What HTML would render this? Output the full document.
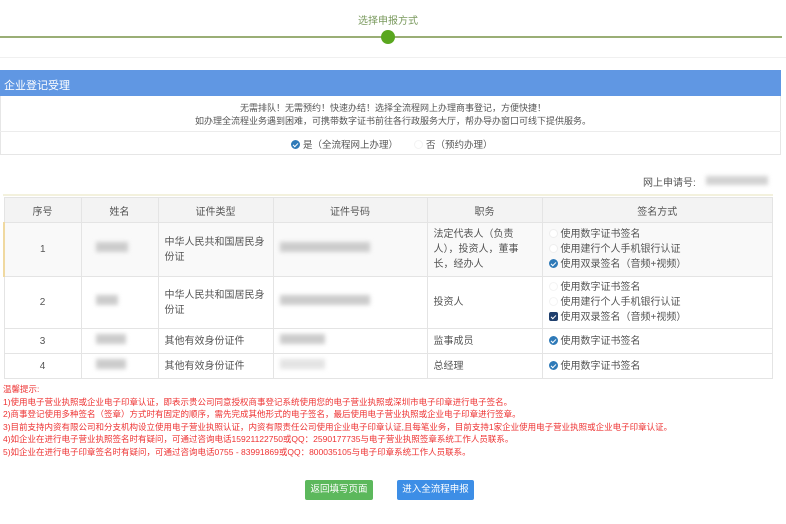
<!DOCTYPE html>
<html><head><meta charset="utf-8"><style>
*{margin:0;padding:0;box-sizing:border-box}
body{width:786px;height:524px;background:#fff;font-family:"Liberation Sans","Noto Sans CJK SC",sans-serif;color:#555;position:relative;overflow:hidden;font-size:10px}
.a{position:absolute;white-space:nowrap}
table{position:absolute;left:3px;top:197px;width:770px;border-collapse:collapse;font-size:10px;color:#555}
td,th{border:1px solid #e4e4e4;font-weight:normal;vertical-align:middle}
th{background:#f3f3f3;height:25px;text-align:center}
td{padding-left:6px;line-height:15px}
.c{text-align:center;padding-left:0}
.blur{display:inline-block;height:10px;background:#ccc;filter:blur(2px)}
.r{display:inline-block;width:9px;height:9px;border-radius:50%;border:1px solid #ddd;vertical-align:-1px;margin-right:3px;background:#fff}
.ck{background:#2f7ab8;border-color:#2f7ab8;position:relative}
.ck:after{content:"";position:absolute;left:2px;top:1px;width:2px;height:4px;border:solid #fff;border-width:0 1px 1px 0;transform:rotate(45deg)}
.sq{border-radius:2px;background:#1f3f6d;border-color:#1f3f6d}
.notes{position:absolute;left:3px;top:383px;color:#e33;font-size:8.5px;line-height:12.6px}
.btn{position:absolute;top:480px;height:20px;color:#fff;font-size:9.5px;line-height:20px;text-align:center;border-radius:2px}
</style></head><body>
<div class="a" style="left:358px;top:12px;color:#7a9a5e;font-size:10px">选择申报方式</div>
<div class="a" style="left:0;top:36px;width:782px;height:2px;background:#9aae76"></div>
<div class="a" style="left:381px;top:30px;width:14px;height:14px;border-radius:50%;background:#5aa71f"></div>
<div class="a" style="left:0;top:57px;width:786px;height:1px;background:#f0f0f0"></div>
<div class="a" style="left:0;top:70px;width:781px;height:26px;background:#6097e3"></div>
<div class="a" style="left:4px;top:77px;color:#fff;font-size:11px">企业登记受理</div>
<div class="a" style="left:0;top:96px;width:781px;height:59px;border:1px solid #e6e6e6;border-top:none"></div>
<div class="a" style="left:0;top:101px;width:786px;text-align:center;font-size:9px;color:#555">无需排队！无需预约！快速办结！选择全流程网上办理商事登记，方便快捷！</div>
<div class="a" style="left:0;top:114px;width:786px;text-align:center;font-size:9px;color:#555">如办理全流程业务遇到困难，可携带数字证书前往各行政服务大厅，帮办导办窗口可线下提供服务。</div>
<div class="a" style="left:0;top:131px;width:781px;height:1px;background:#ececec"></div>
<div class="a" style="left:291px;top:137px;font-size:9.5px"><span class="r ck"></span>是（全流程网上办理）</div>
<div class="a" style="left:414px;top:137px;font-size:9.5px"><span class="r" style="border-color:#f3f3f3"></span>否（预约办理）</div>
<div class="a" style="left:643px;top:174px;font-size:10px">网上申请号:</div>
<div class="a" style="left:706px;top:176px;width:62px;height:9px;background:#d2d2d2;filter:blur(2px)"></div>
<div class="a" style="left:3px;top:194px;width:770px;height:2px;background:#f3f1dd"></div>
<table>
<tr><th style="width:77px">序号</th><th style="width:77px">姓名</th><th style="width:115px">证件类型</th><th style="width:154px">证件号码</th><th style="width:115px">职务</th><th>签名方式</th></tr>
<tr style="height:54px;background:#f9f9f9"><td class="c" style="border-left:2px solid #f0d9a0">1</td><td><span class="blur" style="width:32px;margin-left:8px"></span></td><td>中华人民共和国居民身<br>份证</td><td><span class="blur" style="width:90px"></span></td><td>法定代表人（负责<br>人），投资人，董事<br>长，经办人</td><td><span class="r" style="border-color:#eee"></span>使用数字证书签名<br><span class="r" style="border-color:#eee"></span>使用建行个人手机银行认证<br><span class="r ck"></span>使用双录签名（音频+视频）</td></tr>
<tr style="height:52px"><td class="c">2</td><td><span class="blur" style="width:22px;margin-left:8px"></span></td><td>中华人民共和国居民身<br>份证</td><td><span class="blur" style="width:90px"></span></td><td>投资人</td><td><span class="r" style="border-color:#f3f3f3"></span>使用数字证书签名<br><span class="r" style="border-color:#f3f3f3"></span>使用建行个人手机银行认证<br><span class="r ck sq"></span>使用双录签名（音频+视频）</td></tr>
<tr style="height:25px"><td class="c">3</td><td><span class="blur" style="width:30px;margin-left:8px"></span></td><td>其他有效身份证件</td><td><span class="blur" style="width:45px"></span></td><td>监事成员</td><td><span class="r ck"></span>使用数字证书签名</td></tr>
<tr style="height:25px"><td class="c">4</td><td><span class="blur" style="width:30px;margin-left:8px"></span></td><td>其他有效身份证件</td><td><span class="blur" style="width:45px;background:#e4e4e4"></span></td><td>总经理</td><td><span class="r ck"></span>使用数字证书签名</td></tr>
</table>
<div class="notes">温馨提示:<br>1)使用电子营业执照或企业电子印章认证，即表示贵公司同意授权商事登记系统使用您的电子营业执照或深圳市电子印章进行电子签名。<br>2)商事登记使用多种签名（签章）方式时有固定的顺序，需先完成其他形式的电子签名，最后使用电子营业执照或企业电子印章进行签章。<br>3)目前支持内资有限公司和分支机构设立使用电子营业执照认证，内资有限责任公司使用企业电子印章认证,且每笔业务，目前支持1家企业使用电子营业执照或企业电子印章认证。<br>4)如企业在进行电子营业执照签名时有疑问，可通过咨询电话15921122750或QQ：2590177735与电子营业执照签章系统工作人员联系。<br>5)如企业在进行电子印章签名时有疑问，可通过咨询电话0755 - 83991869或QQ：800035105与电子印章系统工作人员联系。</div>
<div class="btn" style="left:305px;width:68px;background:#5cb85c">返回填写页面</div>
<div class="btn" style="left:397px;width:77px;background:#3d8ee6">进入全流程申报</div>
</body></html>
